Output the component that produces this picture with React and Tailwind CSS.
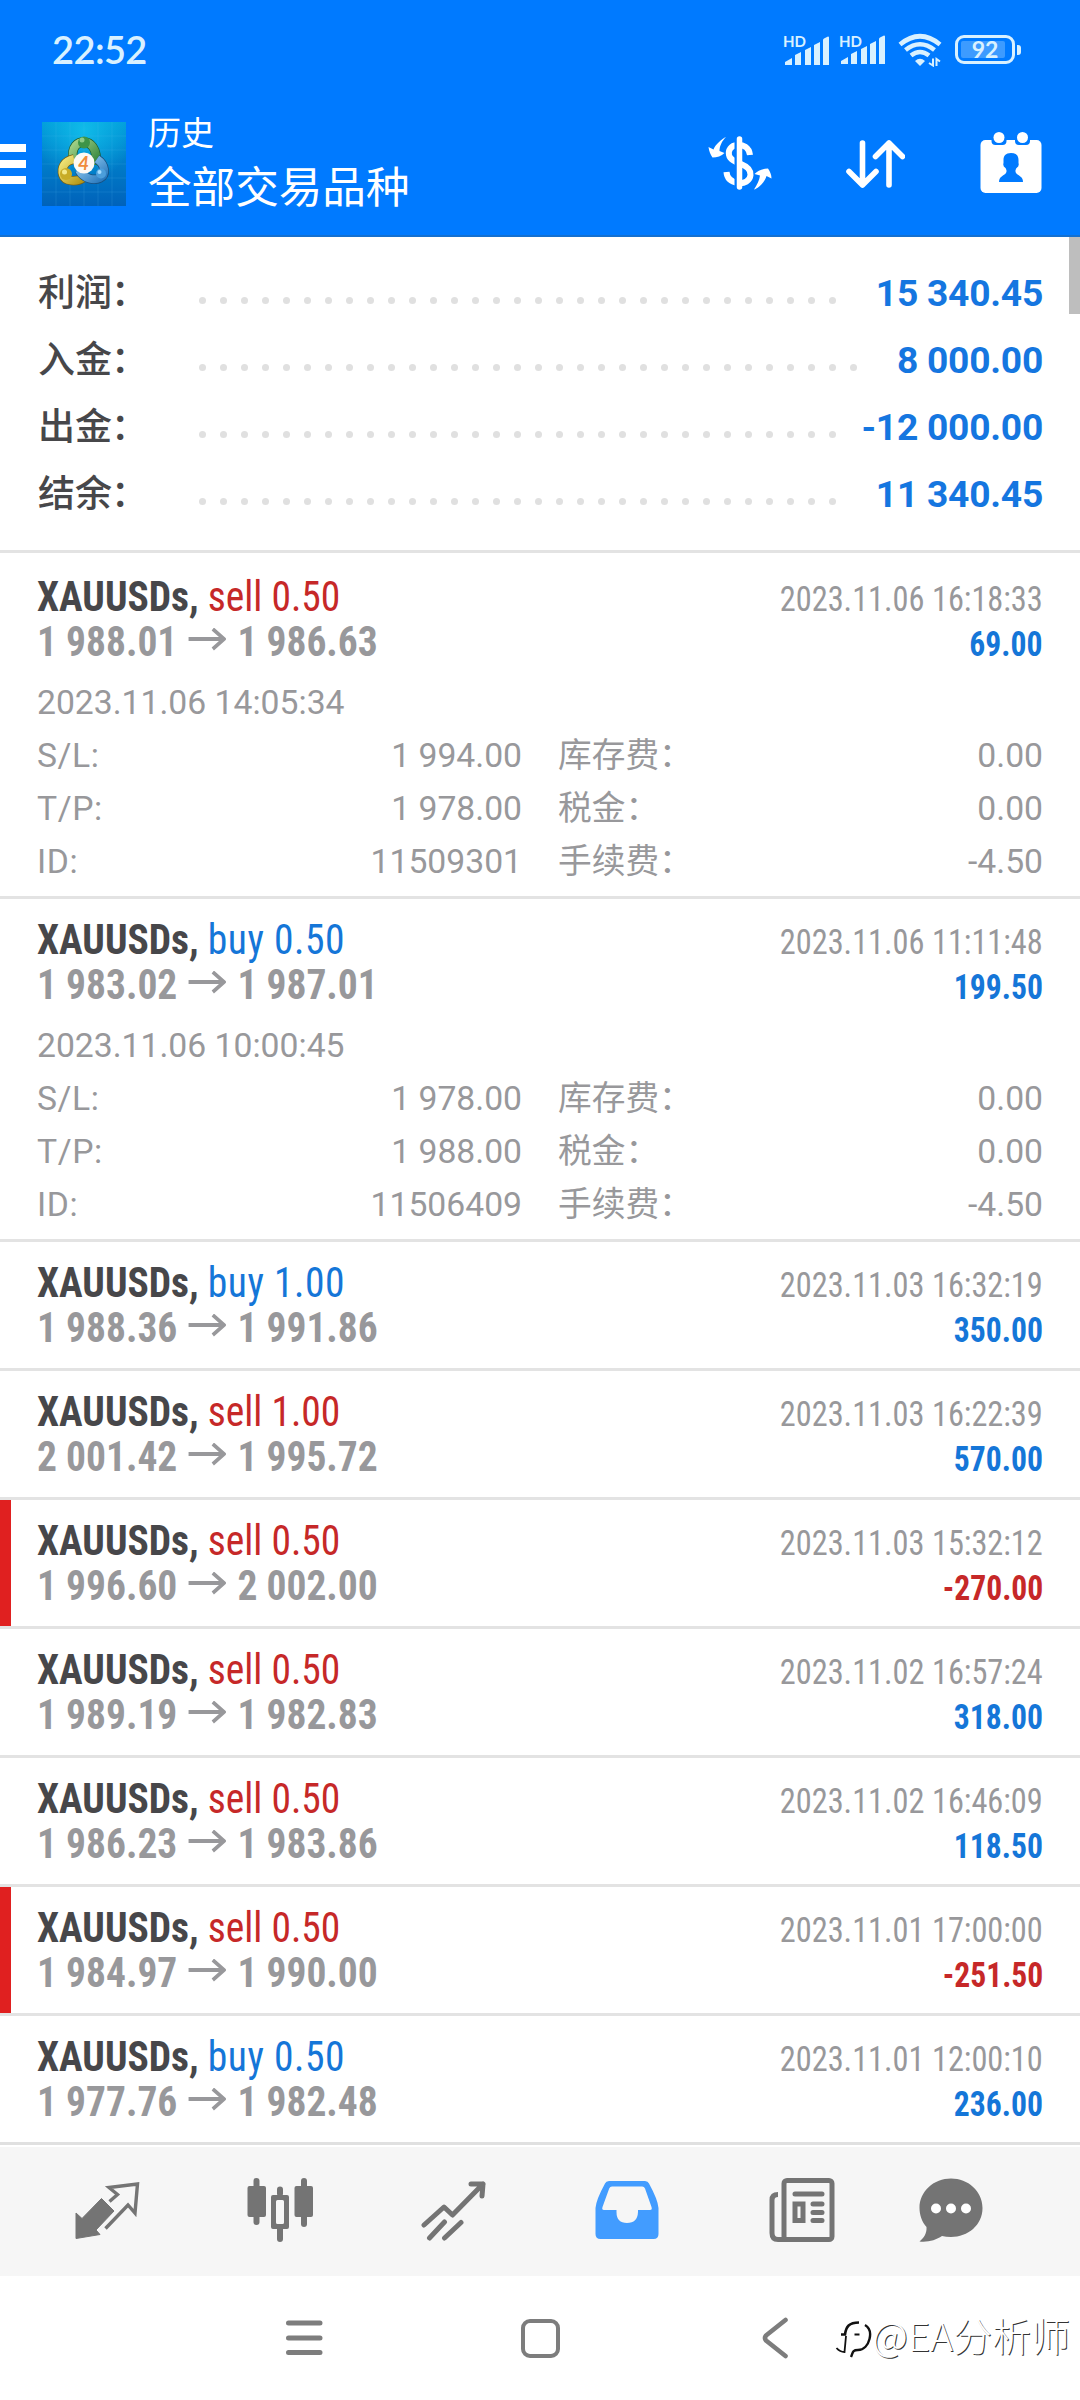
import React from "react";

const summary = [
  { label: "利润", value: "15 340.45", dots: 31 },
  { label: "入金", value: "8 000.00", dots: 32 },
  { label: "出金", value: "-12 000.00", dots: 31 },
  { label: "结余", value: "11 340.45", dots: 31 },
];

const deals = [
  {
    side: "sell",
    volume: "0.50",
    open: "1 988.01",
    close: "1 986.63",
    closedAt: "2023.11.06 16:18:33",
    profit: "69.00",
    details: { openedAt: "2023.11.06 14:05:34", sl: "1 994.00", tp: "1 978.00", id: "11509301" },
  },
  {
    side: "buy",
    volume: "0.50",
    open: "1 983.02",
    close: "1 987.01",
    closedAt: "2023.11.06 11:11:48",
    profit: "199.50",
    details: { openedAt: "2023.11.06 10:00:45", sl: "1 978.00", tp: "1 988.00", id: "11506409" },
  },
  { side: "buy", volume: "1.00", open: "1 988.36", close: "1 991.86", closedAt: "2023.11.03 16:32:19", profit: "350.00" },
  { side: "sell", volume: "1.00", open: "2 001.42", close: "1 995.72", closedAt: "2023.11.03 16:22:39", profit: "570.00" },
  { side: "sell", volume: "0.50", open: "1 996.60", close: "2 002.00", closedAt: "2023.11.03 15:32:12", profit: "-270.00" },
  { side: "sell", volume: "0.50", open: "1 989.19", close: "1 982.83", closedAt: "2023.11.02 16:57:24", profit: "318.00" },
  { side: "sell", volume: "0.50", open: "1 986.23", close: "1 983.86", closedAt: "2023.11.02 16:46:09", profit: "118.50" },
  { side: "sell", volume: "0.50", open: "1 984.97", close: "1 990.00", closedAt: "2023.11.01 17:00:00", profit: "-251.50" },
  { side: "buy", volume: "0.50", open: "1 977.76", close: "1 982.48", closedAt: "2023.11.01 12:00:10", profit: "236.00" },
];

const Signal = () => (
  <div className="relative h-[34px] w-[48px]">
    <span className="absolute -top-[1px] left-0 font-[Lato,sans-serif] text-[15px] leading-[18px] font-bold text-[#d9f1ff]">
      HD
    </span>
    <svg className="mt-[1px]" width="48" height="32" viewBox="0 0 48 32" fill="#d9f1ff">
      <path d="M2 31V28l7-4v7zM12 31V21l6-3v13zM22 31V16l6-3v18zM31 31V11l6-3v23zM40 31V6q0-1 1-1.500l4-2q1 0 1 1v27.500z" />
    </svg>
  </div>
);

const Wifi = () => (
  <svg width="44" height="34" viewBox="0 0 44 34" fill="none" stroke="#d9f1ff" strokeWidth="4.600">
    <path d="M2 11.500Q22-5 42 11.500M7.500 17Q22 5.500 36.500 17M13 22.500Q22 15.500 31 22.500" />
    <path d="M17 28q5-4.500 10 0l-5 5z" fill="#d9f1ff" stroke="none" />
    <path d="M35 25.500v7l-4-2.500M38.500 33v-7l3.500 2.500" strokeWidth="2" />
  </svg>
);

const StatusBar = () => (
  <div className="flex h-[99px] items-center justify-between pr-[59px] pl-[52px]">
    <span className="font-[Lato,sans-serif] text-[38px] font-semibold tracking-[-0.6px] text-[#d9f1ff]">22:52</span>
    <div className="flex items-center">
      <Signal />
      <div className="ml-2">
        <Signal />
      </div>
      <div className="ml-[11px]">
        <Wifi />
      </div>
      <div className="relative ml-[13px] flex h-[29px] w-[60px] items-center rounded-[9px] border-[3px] border-[#d9f1ff] pl-[3px]">
        <div className="h-[17px] w-[44px] rounded-[2px] bg-[#3d9bff]" />
        <span className="absolute inset-0 flex items-center justify-center font-[Lato,sans-serif] text-[23px] leading-none font-bold text-[#d9f1ff]">
          92
        </span>
      </div>
      <div className="ml-[2px] h-[10px] w-[4px] rounded-r-[3px] bg-[#d9f1ff]" />
    </div>
  </div>
);

const AppLogo = () => (
  <svg width="84" height="84" viewBox="0 0 84 84">
    <defs>
      <linearGradient id="logoBg" x1="0" y1="0" x2="0" y2="1">
        <stop offset="0" stopColor="#009bd8" />
        <stop offset="0.5" stopColor="#007cc8" />
        <stop offset="1" stopColor="#0062ba" />
      </linearGradient>
      <radialGradient id="logoGlow" cx="0.5" cy="0.1" r="0.6">
        <stop offset="0" stopColor="#14c4ee" stopOpacity="0.8" />
        <stop offset="1" stopColor="#14c4ee" stopOpacity="0" />
      </radialGradient>
      <linearGradient id="logoGreen" x1="0" y1="0" x2="1" y2="1">
        <stop offset="0" stopColor="#a5d389" />
        <stop offset="1" stopColor="#2d8138" />
      </linearGradient>
      <linearGradient id="logoYellow" x1="0" y1="0" x2="1" y2="1">
        <stop offset="0" stopColor="#f3e77a" />
        <stop offset="1" stopColor="#b39618" />
      </linearGradient>
      <linearGradient id="logoBlue" x1="0" y1="0" x2="1" y2="1">
        <stop offset="0" stopColor="#9bd2f5" />
        <stop offset="1" stopColor="#2878bd" />
      </linearGradient>
    </defs>
    <rect width="84" height="84" fill="url(#logoBg)" />
    <rect width="84" height="84" fill="url(#logoGlow)" />
    <path d="M0 14H84M0 28H84M0 42H84M0 56H84M0 70H84M14 0V84M28 0V84M42 0V84M56 0V84M70 0V84" stroke="#56baf0" strokeOpacity="0.16" fill="none" />
    <g fill="none" strokeWidth="8">
      <path d="M31 38C29 24 36 20 42 20s14 6 12 23" stroke="#1f5d2c" strokeWidth="9.500" />
      <path d="M31 38C29 24 36 20 42 20s14 6 12 23" stroke="url(#logoGreen)" />
      <path d="M32 37C22 39 19 46 21 53s14 7 20 3" stroke="#73611a" strokeWidth="9.500" />
      <path d="M32 37C22 39 19 46 21 53s14 7 20 3" stroke="url(#logoYellow)" />
      <path d="M55 37C64 43 64 53 58 56S42 57 37 48" stroke="#195080" strokeWidth="9.500" />
      <path d="M55 37C64 43 64 53 58 56S42 57 37 48" stroke="url(#logoBlue)" />
    </g>
    <circle cx="42" cy="20.500" r="6" fill="#3d9447" />
    <circle cx="40" cy="18" r="2.500" fill="#8ecb87" />
    <circle cx="24" cy="52" r="6" fill="#c8ac27" />
    <circle cx="22.500" cy="50" r="2.500" fill="#f3e98c" />
    <circle cx="59" cy="51.500" r="5" fill="#4b9edb" />
    <circle cx="57.500" cy="50" r="2" fill="#a5dcff" />
    <circle cx="42" cy="41" r="10.500" fill="#fdfaf5" />
    <text x="41.500" y="48" textAnchor="middle" fontSize="19" fontWeight="700" fontStyle="italic" fontFamily="Lato, sans-serif" fill="#f08c3c">
      4
    </text>
  </svg>
);

const CurrencyIcon = () => (
  <svg width="64" height="56" viewBox="0 0 64 56" fill="none" stroke="#fff">
    <path d="M42 19C41 11 35 8.500 29 9S20 14 21 19s7 7 12 9 10 5 9.500 11S36 48 30 47s-11-4-11.500-11" strokeWidth="6" />
    <path d="M28 4V51" stroke="#007aff" strokeWidth="3" />
    <path d="M31.500 3V51" strokeWidth="5.500" strokeLinecap="round" />
    <path d="M18 1C14 2.500 7 9 5.500 13.500L.5 11C1 15 2.500 19 4.500 21.500c4.500 0 9-1.500 12-4.500l-5-2C11.500 10 14 5 18 1zM46 53.500C50 53 57 46 58.500 40l5 2.500C63.500 39 62 35 60 32.500c-5 0-10 2-13.500 5.500l5.500 1.500C51.500 44 49 49 46 53.500z" fill="#fff" stroke="none" />
  </svg>
);

const SortIcon = () => (
  <svg width="60" height="50" viewBox="0 0 60 50" fill="none" stroke="#fff" strokeWidth="5.600" strokeLinecap="round" strokeLinejoin="round">
    <path d="M17.500 4V46M4 32.500L17.500 46 31 32.500M44 46V4M30.500 17.500L44 4 57.500 17.500" />
  </svg>
);

const CalendarIcon = () => (
  <svg width="62" height="62" viewBox="0 0 62 62" fill="#fff">
    <rect x="0.500" y="8" width="61" height="53" rx="5" />
    <path d="M11.500 7v2q0 4 4 4h7q4 0 4-4V7zM35 7v2q0 4 4 4h7q4 0 4-4V7z" fill="#007aff" />
    <circle cx="19" cy="5.500" r="5.500" />
    <circle cx="42.500" cy="5.500" r="5.500" />
    <path d="M31 21c5.500 0 7.500 3 7.500 7v3q1 3-2 5c-1 2-1.500 3-.5 5 2 3 7 3 7 9H19c0-6 5-6 7-9 1-2 .5-3-.5-5q-3-2-2-5v-3c0-4 2-7 7.500-7z" fill="#007aff" />
  </svg>
);

const Header = () => (
  <header className="flex h-[237px] flex-col border-b-2 border-[#1470d0] bg-[#007aff] text-white">
    <StatusBar />
    <div className="flex h-[130px] items-center">
      <div className="flex w-[26px] flex-col gap-2">
        <div className="h-2 bg-white" />
        <div className="h-2 bg-white" />
        <div className="h-2 bg-white" />
      </div>
      <div className="ml-4">
        <AppLogo />
      </div>
      <div className="mb-[6px] ml-[22px] flex-1 font-['Noto_Sans_CJK_SC',sans-serif]">
        <div className="text-[33px] leading-[46px]">历史</div>
        <div className="text-[43.6px] leading-[60px]">全部交易品种</div>
      </div>
      <CurrencyIcon />
      <div className="ml-[73px]">
        <SortIcon />
      </div>
      <div className="mr-[38px] mb-[3px] ml-[75px]">
        <CalendarIcon />
      </div>
    </div>
  </header>
);

const SummaryRow = ({ label, value, dots }) => (
  <div className="flex h-[67px] items-baseline leading-[67px]">
    <span className="w-[161px] text-[37px] font-medium text-[#47474a]">
      {label}
      <span className="-ml-[1px]">：</span>
    </span>
    <div className="flex flex-1 gap-[14px]">
      {Array.from({ length: dots }, (_, i) => (
        <span key={i} className="size-[7px] -translate-y-[2px] rounded-full bg-[#e0e0e0]" />
      ))}
    </div>
    <span className="text-[37.2px] font-bold tracking-[-0.25px] text-[#1576e0]">{value}</span>
  </div>
);

const DetailRow = ({ name, value, feeName, fee }) => (
  <div className="flex h-[53px] text-[33.7px] leading-[53px]">
    <span className="tracking-[0.6px]">{name}</span>
    <span className="ml-auto">{value}</span>
    <div className="ml-[36px] flex w-[485px] justify-between">
      <span>{feeName}</span>
      <span>{fee}</span>
    </div>
  </div>
);

const Deal = ({ deal, first }) => {
  const { side, volume, open, close, closedAt, profit, details } = deal;
  const loss = profit.startsWith("-");

  return (
    <div className={`relative border-t-[3px] pt-[18px] pr-[37px] pl-[37px] ${details ? "h-[343px]" : "h-[129px]"} ${first ? "border-white" : "border-[#e3e3e3]"}`}>
      {loss && <div className="absolute inset-y-0 left-0 w-[11px] bg-[#e02020]" />}
      <div className="font-['Roboto_Condensed',Roboto,sans-serif] font-stretch-condensed">
        <div className="flex h-[45px] items-baseline justify-between leading-[45px]">
          <span className="origin-left scale-x-[0.94] text-[42px] font-bold text-[#47474a]">
            XAUUSDs,{" "}
            <span className={`font-normal ${side === "sell" ? "text-[#c62828]" : "tracking-[0.6px] text-[#1576d8]"}`}>
              {side} {volume}
            </span>
          </span>
          <span className="origin-right scale-x-[0.94] text-[34.4px] text-[#98989b]">{closedAt}</span>
        </div>
        <div className="flex h-[45px] items-baseline justify-between leading-[45px]">
          <span className="flex origin-left scale-x-[0.94] items-baseline text-[42px] font-bold text-[#98989b]">
            {open}
            <svg className="mx-[12px]" width="40" height="28" viewBox="0 0 40 28" fill="none" stroke="#98989b" strokeWidth="3.800">
              <path d="M0 11H38M26 1L38 11 26 21" />
            </svg>
            {close}
          </span>
          <span className={`origin-right scale-x-[0.92] text-[34.4px] font-bold ${loss ? "text-[#c62828]" : "text-[#1576d8]"}`}>
            {profit}
          </span>
        </div>
      </div>
      {details && (
        <div className="mt-[12px] text-[#98989b]">
          <div className="h-[53px] text-[33.7px] leading-[53px]">{details.openedAt}</div>
          <DetailRow name="S/L:" value={details.sl} feeName="库存费：" fee="0.00" />
          <DetailRow name="T/P:" value={details.tp} feeName="税金：" fee="0.00" />
          <DetailRow name="ID:" value={details.id} feeName="手续费：" fee="-4.50" />
        </div>
      )}
    </div>
  );
};

// Bottom tabs
const TradeIcon = () => (
  <svg width="66" height="58" viewBox="0 0 66 58">
    <path d="M27.500 17.500L40 30 22 49 26 53.500 2 57.500V32L8 37.500z" fill="#747474" stroke="#747474" strokeLinejoin="round" />
    <path d="M31.500 47.500L54 24 61 32 63.500 3 35 6.500 43.500 13.500 35.500 20.500" fill="none" stroke="#747474" strokeWidth="3.400" />
  </svg>
);

const CandlesIcon = () => (
  <svg width="68" height="68" viewBox="0 0 68 68" fill="#747474">
    <rect x="0.500" y="9" width="18.500" height="31" rx="2" />
    <rect x="6.500" y="1" width="6" height="47" rx="3" />
    <rect x="47.500" y="9" width="18.500" height="31" rx="2" />
    <rect x="54" y="1" width="6" height="49" rx="3" />
    <path d="M26 18h14q2 0 2 2v30q0 2-2 2H26q-2 0-2-2V20q0-2 2-2zm4.500 5q-1.500 0-1.500 1.500v21q0 1.500 1.500 1.500h5q1.500 0 1.500-1.500v-21q0-1.500-1.500-1.500z" fillRule="evenodd" />
    <rect x="30" y="9.500" width="6" height="10" rx="3" />
    <path d="M30 51h6v11a3 3 0 0 1-6 0z" />
  </svg>
);

const TrendIcon = () => (
  <svg width="66" height="62" viewBox="0 0 66 62" fill="none" stroke="#747474" strokeWidth="5" strokeLinecap="round" strokeLinejoin="round">
    <path d="M4 46L24 28 32.500 36 63 5M51 5H63L62 17M24.500 43L9.500 59M41 43.500L24.500 59" />
  </svg>
);

const InboxIcon = () => (
  <svg width="64" height="60" viewBox="0 0 64 60">
    <path
      fillRule="evenodd"
      d="M14 1H50q3 0 4 2.500Q63 20 63.500 28V54q0 5-5 5H5.500q-5 0-5-5V28Q1 20 10 3.500 11 1 14 1zM17 6.500q-2 0-2.800 2L7.500 27q-1 3 1.500 3H21.500v2q0 11 10.500 11T43 32v-2H55q2.500 0 1.500-3L50 8.500q-.8-2-2.800-2z"
      fill="#429cff"
    />
  </svg>
);

const NewsIcon = () => (
  <svg width="68" height="66" viewBox="0 0 68 66" fill="none" stroke="#747474" strokeWidth="5">
    <rect x="16" y="3.500" width="48" height="59" rx="3" />
    <path d="M10 17.500Q4 17.500 4 23V56q0 6.500 6 6.500H20" />
    <path d="M27 17H54M45 27H54M45 35.500H54M45 43.500H54" strokeLinecap="round" />
    <rect x="27" y="27" width="8" height="16.500" />
  </svg>
);

const ChatIcon = () => (
  <svg width="66" height="66" viewBox="0 0 66 66">
    <path d="M33 1.500C50 1.500 64.500 14 64.500 31S50 60 33 60q-5 0-9-1C18 63 10 65.500 1.500 64.500 6 61 9 56 8.500 50 4 45 1.500 38 1.500 31 1.500 14 16 1.500 33 1.500z" fill="#747474" />
    <circle cx="18" cy="31.500" r="5" fill="#fff" />
    <circle cx="33" cy="31.500" r="5" fill="#fff" />
    <circle cx="48" cy="31.500" r="5" fill="#fff" />
  </svg>
);

const TabBar = () => (
  <div className="h-[134px] border-t-[3px] border-[#e0e0e0] bg-white pt-[2px]">
    <div className="flex h-[129px] items-center bg-[#f6f6f6] pb-[4px] pl-[74px]">
      <TradeIcon />
      <div className="mt-[2px] ml-[107px]">
        <CandlesIcon />
      </div>
      <div className="ml-[105px]">
        <TrendIcon />
      </div>
      <div className="ml-[109px]">
        <InboxIcon />
      </div>
      <div className="ml-[109px]">
        <NewsIcon />
      </div>
      <div className="ml-[82px]">
        <ChatIcon />
      </div>
    </div>
  </div>
);

const SystemNav = () => (
  <div className="relative flex h-[124px] items-center bg-white pl-[286px]">
    <svg width="37" height="40" viewBox="0 0 37 40" stroke="#7d7d7d" strokeWidth="5" strokeLinecap="round">
      <path d="M2.500 5H34M2.500 20H34M2.500 34.500H34" />
    </svg>
    <div className="ml-[198px] size-[39px] rounded-[9px] border-4 border-[#7d7d7d]" />
    <svg className="ml-[202px]" width="26" height="42" viewBox="0 0 26 42" fill="none" stroke="#7d7d7d" strokeWidth="4.600" strokeLinecap="round" strokeLinejoin="round">
      <path d="M23.500 3L4 18.500q-2 2.500 0 5L23.500 39" />
    </svg>
    <div className="absolute top-[30px] right-[10px] flex items-center">
      <svg className="mt-[6px] -mr-[1px]" width="38" height="46" viewBox="0 0 38 46" fill="none" stroke="#111">
        <path d="M6 20.500h4c1-8 4-12 14-12" strokeWidth="2.600" />
        <path d="M30 11c5 3 6 8 4.500 14S29 36 23 36s-5 3-7 7" strokeWidth="2.400" />
        <path d="M19.500 20.500h5M11 22L9.500 38Q5 38 1.500 34" strokeWidth="1.800" />
      </svg>
      <span className="font-['Noto_Sans_CJK_SC',sans-serif] text-[39px] leading-[56px] font-light text-white [text-shadow:1px_1px_0.5px_#333]">
        @EA分析师
      </span>
    </div>
  </div>
);

const App = () => {
  return (
    <div className="w-[1080px] bg-white font-[Roboto,'Noto_Sans_CJK_SC',sans-serif]">
      <Header />
      <main className="relative">
        <div className="absolute top-0 right-0 h-[77px] w-[11px] bg-[#bebebe]" />
        <section className="h-[316px] border-b-[3px] border-[#e3e3e3] pt-[23px] pr-[37px] pl-[38px]">
          {summary.map((row) => (
            <SummaryRow key={row.label} {...row} />
          ))}
        </section>
        {deals.map((deal, i) => (
          <Deal key={deal.closedAt} deal={deal} first={i === 0} />
        ))}
      </main>
      <TabBar />
      <SystemNav />
    </div>
  );
};

export default App;
